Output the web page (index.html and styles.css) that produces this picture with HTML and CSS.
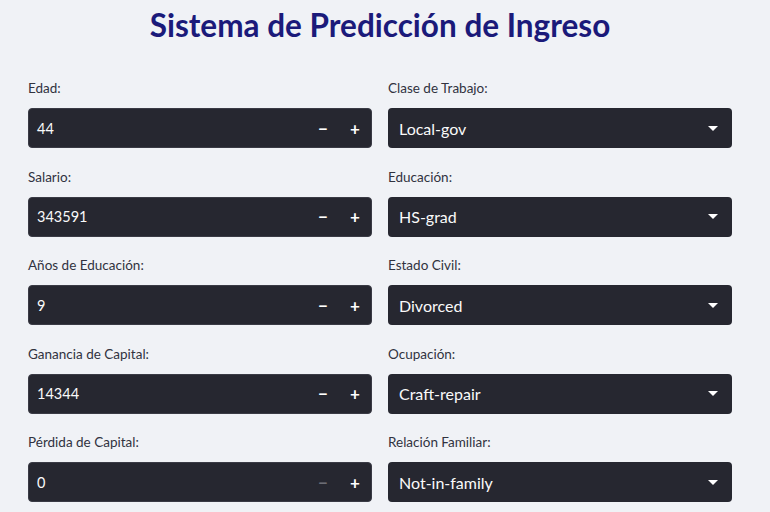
FILE: index.html
```html
<!DOCTYPE html>
<html lang="es">
<head>
<meta charset="utf-8">
<link rel="stylesheet" href="styles.css">
</head>
<body>
<h1 class="title">Sistema de Predicción de Ingreso</h1>
<div class="grid">
  <div class="field">
    <label class="label">Edad:</label>
    <div class="num"><span class="val">44</span><span class="btn">−</span><span class="btn">+</span></div>
  </div>
  <div class="field">
    <label class="label">Clase de Trabajo:</label>
    <div class="sel"><span class="sval">Local-gov</span><span class="caret"></span></div>
  </div>
  <div class="field">
    <label class="label">Salario:</label>
    <div class="num"><span class="val">343591</span><span class="btn">−</span><span class="btn">+</span></div>
  </div>
  <div class="field">
    <label class="label">Educación:</label>
    <div class="sel"><span class="sval">HS-grad</span><span class="caret"></span></div>
  </div>
  <div class="field">
    <label class="label">Años de Educación:</label>
    <div class="num"><span class="val">9</span><span class="btn">−</span><span class="btn">+</span></div>
  </div>
  <div class="field">
    <label class="label">Estado Civil:</label>
    <div class="sel"><span class="sval">Divorced</span><span class="caret"></span></div>
  </div>
  <div class="field">
    <label class="label">Ganancia de Capital:</label>
    <div class="num"><span class="val">14344</span><span class="btn">−</span><span class="btn">+</span></div>
  </div>
  <div class="field">
    <label class="label">Ocupación:</label>
    <div class="sel"><span class="sval">Craft-repair</span><span class="caret"></span></div>
  </div>
  <div class="field">
    <label class="label">Pérdida de Capital:</label>
    <div class="num"><span class="val">0</span><span class="btn dim">−</span><span class="btn">+</span></div>
  </div>
  <div class="field">
    <label class="label">Relación Familiar:</label>
    <div class="sel"><span class="sval">Not-in-family</span><span class="caret"></span></div>
  </div>
</div>
</body>
</html>
```
FILE: styles.css
```css
html, body {
  margin: 0;
  background: #f0f2f6;
  font-family: "Lato", "Liberation Sans", sans-serif;
  overflow: hidden;
}
.title {
  margin: 0;
  padding: 6px 10px 0 0;
  height: 42px;
  text-align: center;
  font-size: 31.5px;
  font-weight: 700;
  color: #1b1a7a;
  line-height: 38px;
}
.grid {
  display: grid;
  grid-template-columns: 344px 344px;
  column-gap: 16px;
  row-gap: 18.5px;
  padding: 30px 0 0 28px;
}
.field {
  display: flex;
  flex-direction: column;
}
.label {
  font-size: 13.5px;
  color: #31333f;
  height: 20px;
  line-height: 20px;
  margin-bottom: 10px;
}
.num, .sel {
  height: 40px;
  background: #262730;
  border-radius: 4px;
  display: flex;
  align-items: center;
  color: #fafafa;
  box-sizing: border-box;
}
.num {
  border: 1px solid #3a3b45;
}
.val {
  flex: 1;
  padding-left: 8px;
  font-size: 14.5px;
}
.btn {
  width: 32px;
  text-align: center;
  font-size: 17px;
  font-weight: 700;
  color: #ffffff;
}
.btn.dim {
  color: #6c6d75;
}
.sval {
  flex: 1;
  padding-left: 11px;
  font-size: 16px;
}
.caret {
  width: 0;
  height: 0;
  border-left: 5px solid transparent;
  border-right: 5px solid transparent;
  border-top: 5px solid #ffffff;
  margin-right: 14px;
}
```
